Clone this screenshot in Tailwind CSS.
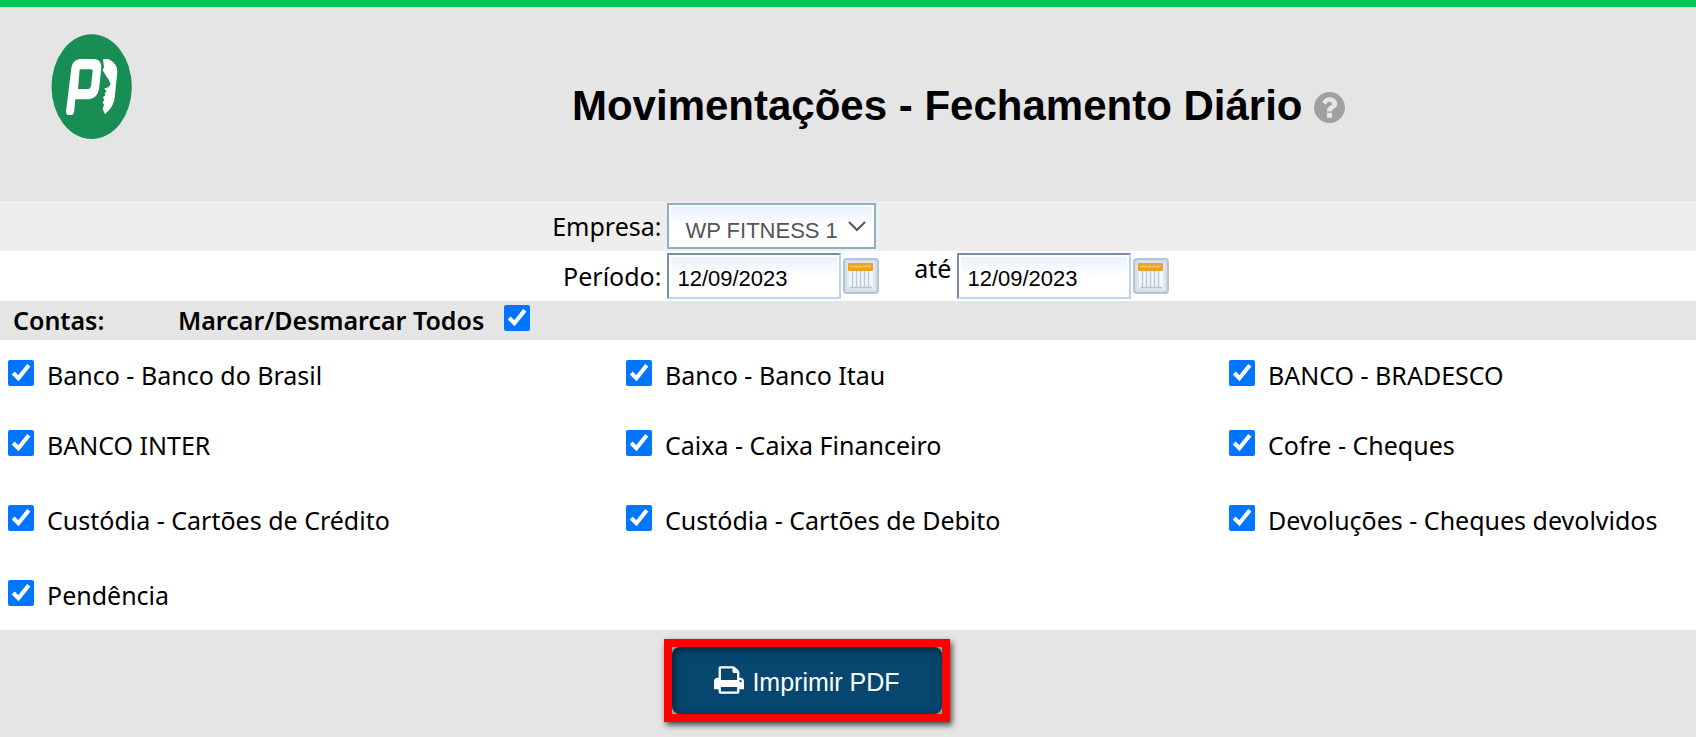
<!DOCTYPE html>
<html lang="pt-BR">
<head>
  <meta charset="UTF-8" />
  <meta name="viewport" content="width=device-width, initial-scale=1.0" />
  <title>Movimentações - Fechamento Diário</title>
  <script src="https://cdn.jsdelivr.net/npm/@tailwindcss/browser@4"></script>
</head>
<body class="min-h-screen bg-[#e5e5e5] font-[Noto_Sans,sans-serif] text-[25px] leading-[30px] text-black">
  <svg class="hidden">
    <symbol id="calendar" viewBox="0 0 36 36">
      <rect x="1" y="1" width="34" height="34" rx="3" fill="#d3dfeb" stroke="#b3c4d5" stroke-width="2" />
      <rect x="4" y="4" width="28" height="28" rx="1" fill="#dfe8f1" />
      <rect x="6" y="12" width="24" height="18" fill="#f4f7fa" />
      <path d="M9.500 13v16M13.500 13v16M17.500 13v16M21.500 13v16M25.500 13v16" stroke="#bccbd9" stroke-width="1.500" />
      <path d="M7 29.500h22" stroke="#b3c4d5" stroke-width="1.500" />
      <rect x="5" y="5" width="25" height="8" rx="1" fill="#e9a21f" />
      <path d="M7 8.500h21" stroke="#f6bf57" stroke-width="2" />
    </symbol>
  </svg>

  <header class="flex h-[201px] border-t-[7px] border-[#04c556]">
    <div class="w-[13%] shrink-0 pt-[27px] pl-[51px]">
      <svg class="h-[105px] w-[81px]" viewBox="64 102 243 315" role="img" aria-label="Pacto">
        <ellipse cx="186" cy="260" rx="120.500" ry="157" fill="#188e54" />
        <path fill="#fff" fill-rule="evenodd" d="M150 177H194Q216 179 215 204L208 268Q203 296 178 298H137L133 338Q131 345 124 345H116Q109 344 109 335L125 204Q128 180 150 177ZM150 208L145 267H177Q183 266 184 259L189 214Q189 208 184 208Z" />
        <path fill="#fff" d="M220 178Q234 176 242 180Q264 193 263 216L255 294Q252 315 239 329L226 343L219 327L223 315L219 307L224 299L220 292L227 286L225 280L231 273L223 266L236 262L243 253Q240 240 231 230L219 211L223 202Z" />
      </svg>
    </div>
    <div class="flex flex-1 items-start justify-center gap-3 pt-[75px] pl-px">
      <h1 class="font-[Liberation_Sans,Arial,sans-serif] text-[42px] leading-[48px] font-bold">Movimentações - Fechamento Diário</h1>
      <button type="button" aria-label="Ajuda" class="mt-[10px]">
        <svg class="size-[31px] fill-[#a0a0a0]" viewBox="128 128 1536 1536"><path d="M1024 1376v-192q0-14-9-23t-23-9h-192q-14 0-23 9t-9 23v192q0 14 9 23t23 9h192q14 0 23-9t9-23zm256-672q0-88-55.500-163t-138.500-116-170-41q-243 0-371 213-15 24 8 42l132 100q7 6 19 6 16 0 25-12 53-68 86-92 34-24 86-24 48 0 85.500 26t37.500 59q0 38-20 61t-68 45q-63 28-115.500 86.500t-52.500 125.500v36q0 14 9 23t23 9h192q14 0 23-9t9-23q0-19 21.500-49.500t54.500-49.500q32-18 49-28.500t46-35 44.500-48 28-60.500 12.500-81zm384 192q0 209-103 385.500t-279.500 279.500-385.500 103-385.500-103-279.500-279.500-103-385.500 103-385.500 279.500-279.500 385.500-103 385.500 103 279.500 279.500 103 385.500z" /></svg>
      </button>
    </div>
  </header>

  <form>
    <div class="flex h-[50px] items-center gap-[6px] bg-[#eee]">
      <label for="empresa" class="w-[39%] text-right">Empresa:</label>
      <div class="grid items-center">
        <select id="empresa" class="col-start-1 row-start-1 h-[46px] w-[209px] appearance-none border-2 border-[#8cb2c2] bg-linear-to-b from-[#e8f0fe] to-white to-50% pt-[10px] pl-4 font-[Liberation_Sans,Arial,sans-serif] text-[22px] leading-8 text-[#555] shadow-[inset_0_0_0_2px_#fff]">
          <option>WP FITNESS 1</option>
        </select>
        <svg class="pointer-events-none col-start-1 row-start-1 mr-[10px] h-[11px] w-[18px] justify-self-end" viewBox="0 0 18 11" fill="none" stroke="#555" stroke-width="2"><path d="M1 1l8 8 8-8" /></svg>
      </div>
    </div>

    <div class="flex h-[50px] items-center gap-[6px] bg-white">
      <label for="inicio" class="w-[39%] text-right">Período:</label>
      <div class="flex items-center gap-[2px]">
        <input id="inicio" type="text" value="12/09/2023" class="h-[46px] w-[174px] border-2 border-t-[#7f8ca6] border-r-[#bbd3f5] border-b-[#bbd3f5] border-l-[#7f8ca6] bg-linear-to-b from-[#e8f0fe] to-white to-50% pt-[6px] pl-2 font-[Liberation_Sans,Arial,sans-serif] text-[22px] shadow-[inset_0_0_0_2px_#fff]" />
        <button type="button" aria-label="Escolher data inicial"><svg class="size-9"><use href="#calendar" /></svg></button>
      </div>
      <div class="ml-7 flex w-[38px] justify-end self-start pt-0.5">
        <label for="fim">até</label>
      </div>
      <div class="flex items-center gap-[2px]">
        <input id="fim" type="text" value="12/09/2023" class="h-[46px] w-[174px] border-2 border-t-[#7f8ca6] border-r-[#bbd3f5] border-b-[#bbd3f5] border-l-[#7f8ca6] bg-linear-to-b from-[#e8f0fe] to-white to-50% pt-[6px] pl-2 font-[Liberation_Sans,Arial,sans-serif] text-[22px] shadow-[inset_0_0_0_2px_#fff]" />
        <button type="button" aria-label="Escolher data final"><svg class="size-9"><use href="#calendar" /></svg></button>
      </div>
    </div>

    <div class="flex h-[39px] items-start pt-1 pl-[13px] font-semibold">
      <span class="w-[165px]">Contas:</span>
      <label for="todos" class="mr-5">Marcar/Desmarcar Todos</label>
      <input id="todos" type="checkbox" checked class="size-[26px]" />
    </div>

    <div class="grid grid-cols-[618fr_603fr_467fr] grid-rows-[70px_75px_75px_50px] bg-white pt-5 pl-2">
      <label class="flex items-start gap-[13px]"><input type="checkbox" checked class="size-[26px]" />Banco - Banco do Brasil</label>
      <label class="flex items-start gap-[13px]"><input type="checkbox" checked class="size-[26px]" />Banco - Banco Itau</label>
      <label class="flex items-start gap-[13px]"><input type="checkbox" checked class="size-[26px]" />BANCO - BRADESCO</label>
      <label class="flex items-start gap-[13px]"><input type="checkbox" checked class="size-[26px]" />BANCO INTER</label>
      <label class="flex items-start gap-[13px]"><input type="checkbox" checked class="size-[26px]" />Caixa - Caixa Financeiro</label>
      <label class="flex items-start gap-[13px]"><input type="checkbox" checked class="size-[26px]" />Cofre - Cheques</label>
      <label class="flex items-start gap-[13px]"><input type="checkbox" checked class="size-[26px]" />Custódia - Cartões de Crédito</label>
      <label class="flex items-start gap-[13px]"><input type="checkbox" checked class="size-[26px]" />Custódia - Cartões de Debito</label>
      <label class="flex items-start gap-[13px]"><input type="checkbox" checked class="size-[26px]" />Devoluções - Cheques devolvidos</label>
      <label class="flex items-start gap-[13px]"><input type="checkbox" checked class="size-[26px]" />Pendência</label>
    </div>

    <div class="flex justify-center pt-[9px] pr-[82px]">
      <div class="border-8 border-[#f00] bg-[#a09a96] shadow-[2px_3px_6px_rgba(0,0,0,0.7)]">
        <button type="submit" class="flex h-[67px] w-[270px] items-center justify-center gap-2 rounded-lg bg-[#07476f] pt-[3px] font-[Liberation_Sans,Arial,sans-serif] text-[25px] text-white shadow-[inset_2px_2px_8px_rgba(0,0,0,0.5)]">
          <svg class="mb-1 h-7 w-[30px] fill-white" viewBox="64 128 1664 1536"><path d="M448 1536h896v-256h-896v256zm0-640h896v-384h-160q-40 0-68-28t-28-68v-160h-640v640zm1152 64q0-26-19-45t-45-19-45 19-19 45 19 45 45 19 45-19 19-45zm128 0v416q0 13-9.500 22.500t-22.500 9.500h-224v160q0 40-28 68t-68 28h-960q-40 0-68-28t-28-68v-160h-224q-13 0-22.500-9.500t-9.500-22.500v-416q0-79 56.500-135.500t135.500-56.500h64v-544q0-40 28-68t68-28h672q40 0 88 20t76 48l152 152q28 28 48 76t20 88v256h64q79 0 135.500 56.500t56.500 135.500z" /></svg>
          Imprimir PDF
        </button>
      </div>
    </div>
  </form>
</body>
</html>
